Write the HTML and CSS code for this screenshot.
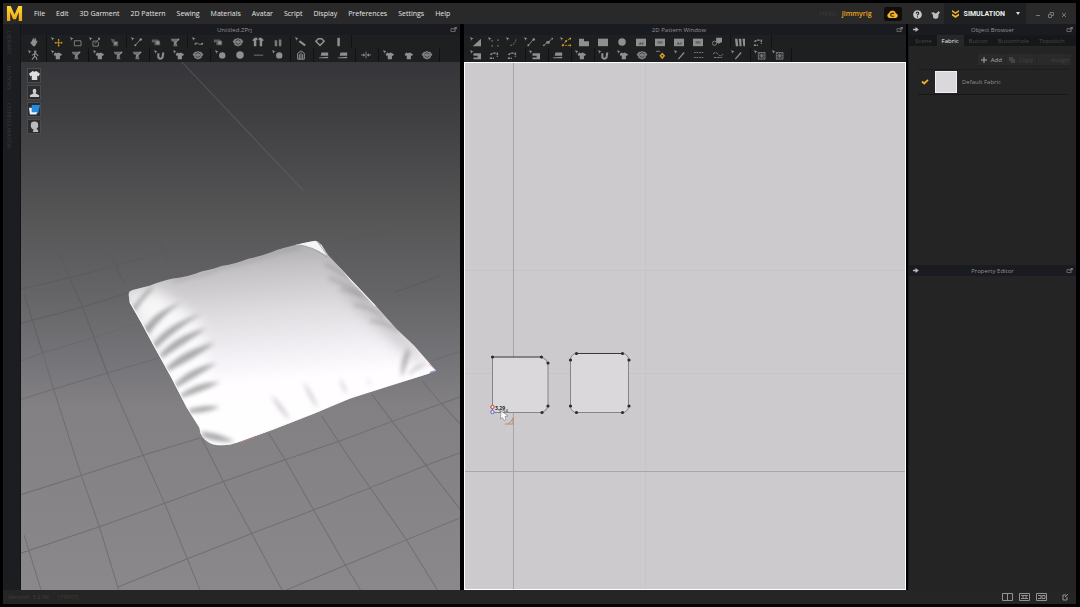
FILE: index.html
```html
<!DOCTYPE html>
<html lang="en">
<head>
<meta charset="utf-8">
<title>Untitled.ZPrj</title>
<link rel="stylesheet" href="styles.css">
</head>
<body>
<svg class="sprite" aria-hidden="true">
  <defs>
    <path id="cur" d="M0 0l4 2-2 .6L1.400 4.500z"/>
    <path id="tee" d="M5 3l2 .8L9 3l4 2-1.200 2.200-1.300-.5V11h-5V6.700l-1.300.5L3 5z"/>
  </defs>
  <symbol id="hand" viewBox="0 0 14 12"><path d="M4.500 5V3l1-.3L6 4l.3-3h1L7.800 4l.7-2.500 1 .3V5l1-.8.8.8-2.300 4.500L8 11H6L2.500 7l.8-.9z"/></symbol>
  <symbol id="walk" viewBox="0 0 14 12"><use href="#cur"/><circle cx="8.500" cy="2" r="1.500"/><path d="M7 4l3 1 2 2M8 4L4.500 6.500M8 4l-.5 4-3 3.500M7.700 7.500L10 9l.5 3" fill="none" stroke="currentColor" stroke-width="1.300"/></symbol>
  <symbol id="move" viewBox="0 0 14 12"><use href="#cur"/><path class="gold-line" d="M9 3v8M5 7h8"/><path class="gold" d="M9 2l1.300 2H7.700zM9 12l1.300-2H7.700zM4 7l2-1.300v2.600zM14 7l-2-1.300v2.600z"/></symbol>
  <symbol id="box" viewBox="0 0 14 12"><use href="#cur"/><path d="M5 4.500h8v6H5z" fill="none" stroke="currentColor"/></symbol>
  <symbol id="boxpen" viewBox="0 0 14 12"><use href="#cur"/><path d="M10 5H4.500v6H11V6M7 8l5-6" fill="none" stroke="currentColor"/><path d="M10 1h3v3z"/></symbol>
  <symbol id="pin" viewBox="0 0 14 12"><path d="M3 2l5 1v3l-3 1zM6 5h6v6H6z" opacity=".5"/><circle cx="9" cy="7.500" r="1.800"/></symbol>
  <symbol id="line" viewBox="0 0 14 12"><use href="#cur"/><path d="M5 10l6-7" stroke="currentColor"/><circle cx="5" cy="10" r="1.200"/><circle cx="11.500" cy="3" r="1.500"/></symbol>
  <symbol id="brush" viewBox="0 0 14 12"><use href="#cur"/><path d="M5 5l7 5" stroke="currentColor" stroke-width="2.500"/></symbol>
  <symbol id="seam" viewBox="0 0 14 12"><use href="#cur"/><path d="M4 8c2-3 4 3 8 0" stroke="currentColor" fill="none"/><circle cx="4" cy="8" r="1.200"/><circle cx="12" cy="8" r="1.200"/></symbol>
  <symbol id="tee1" viewBox="0 0 14 12"><use href="#tee"/></symbol>
  <symbol id="teecur" viewBox="0 0 14 12"><use href="#cur"/><use href="#tee"/></symbol>
  <symbol id="teefold" viewBox="0 0 14 12"><path d="M2 2h9l1 2H8l2 7H5L6 6 3 5z" opacity=".75"/><path d="M6 8l6-6" stroke="currentColor" stroke-width="1.600"/></symbol>
  <symbol id="teedot" viewBox="0 0 14 12"><path d="M2 3h7l3 2v5H5V6L2 7z" opacity=".55"/><circle cx="9" cy="7" r="2.200"/></symbol>
  <symbol id="pair" viewBox="0 0 14 12"><path d="M0 4l3-3h3l.5 3-1.500-.5V11H2V5zM14 4l-3-3H8l-.5 3 1.500-.5V11h3V5z"/></symbol>
  <symbol id="legs" viewBox="0 0 14 12"><path d="M3 4h3v7H3zM8 3h3v8H8z" opacity=".8"/></symbol>
  <symbol id="ring" viewBox="0 0 14 12"><path d="M2 5l3-3h4l3 3-5 5z" fill="none" stroke="currentColor" stroke-width="1.800"/></symbol>
  <symbol id="bar" viewBox="0 0 14 12"><path d="M5 1h3v10H5z"/></symbol>
  <symbol id="hook" viewBox="0 0 14 12"><use href="#cur"/><path d="M5 4v5q3 3 5 0l1-6" fill="none" stroke="currentColor" stroke-width="2.500"/></symbol>
  <symbol id="ball" viewBox="0 0 14 12"><circle cx="7" cy="6" r="4.500"/></symbol>
  <symbol id="ballcur" viewBox="0 0 14 12"><use href="#cur"/><circle cx="8.500" cy="6.500" r="3.800"/></symbol>
  <symbol id="dash" viewBox="0 0 14 12"><path d="M1 5.500h11v1.500H1z" opacity=".6"/></symbol>
  <symbol id="gear" viewBox="0 0 14 12"><path d="M7 1l1.500 1.200 2.200-.2 1.800 2.200 1 1.600-1.800 1.700-.5 2.200-2.200.8L7 11.500l-2-1-2.300-.8-.4-2.200L.5 5.800 1.500 4.200 3.300 2l2.200.2z" opacity=".85"/><path d="M4 5l3-2 3 2M4 7l3 2 3-2" fill="none" stroke="#222" stroke-width=".7"/></symbol>
  <symbol id="jacket" viewBox="0 0 14 12"><path d="M3 4l4-3 4 3v7H3zM5 5v6M7 3v8M9 5v6" fill="none" stroke="currentColor" stroke-width="1.200"/></symbol>
  <symbol id="iron" viewBox="0 0 14 12"><path d="M4 3h8v4H3zM1 10V9l11-1v2z"/></symbol>
  <symbol id="split" viewBox="0 0 14 12"><path d="M7 2v8" stroke="currentColor"/><path d="M1 6h4M9 6h4" stroke="currentColor"/><path d="M6 6L3.500 4v4zM8 6l2.500-2v4z"/></symbol>
  <symbol id="tri" viewBox="0 0 14 12"><use href="#cur"/><path d="M13 2v9H3z"/></symbol>
  <symbol id="dots" viewBox="0 0 14 12"><use href="#cur"/><path d="M4 4h1.500v1.500H4zM11 3h1.500v1.500H11zM4 10h1.500v1.500H4zM11 10h1.500v1.500H11z"/></symbol>
  <symbol id="curve" viewBox="0 0 14 12"><use href="#cur"/><path d="M5 10q5 0 7-7" fill="none" stroke="currentColor" stroke-dasharray="2 1"/></symbol>
  <symbol id="nodes" viewBox="0 0 14 12"><path d="M2 10l9-7" stroke="currentColor"/><path d="M5 5h4v3H5z"/><circle cx="2" cy="10" r="1.100"/><circle cx="12" cy="2" r="1.100"/></symbol>
  <symbol id="goldnodes" viewBox="0 0 14 12"><use href="#cur"/><path class="gold-line" d="M3 10l4-5 5-3M3 10h9" stroke-dasharray="2 1"/><path class="gold" d="M2 9h2v2H2zM6 4h2v2H6zM11 1h2v2h-2zM11 9h2v2h-2z"/></symbol>
  <symbol id="poly" viewBox="0 0 14 12"><path d="M1 2h6v3h6v6H1z"/></symbol>
  <symbol id="rect" viewBox="0 0 14 12"><path d="M1 2h12v9H1z"/></symbol>
  <symbol id="rectin" viewBox="0 0 14 12"><path d="M1 2h12v9H1z"/><path d="M4 9l2-3 2 2 2-3v4z" fill="#555"/></symbol>
  <symbol id="rectbar" viewBox="0 0 14 12"><path d="M1 2h12v9H1z"/><path d="M4 5h6v3H4z" fill="#666"/></symbol>
  <symbol id="copy" viewBox="0 0 14 12"><path d="M6 1h7v5L9 8 6 6z"/><circle cx="4" cy="7.500" r="2.500" fill="none" stroke="currentColor"/></symbol>
  <symbol id="pleats" viewBox="0 0 14 12"><path d="M1 2h3l1 9H2zM5.500 2h3l.5 9H6.500zM10 2h3v9h-2z"/></symbol>
  <symbol id="machine" viewBox="0 0 14 12"><use href="#cur"/><path d="M4 4h9v7H4v-2h5V7H4z"/></symbol>
  <symbol id="stitch" viewBox="0 0 14 12"><path d="M3 6q1-3 8-2v4M2 10h5" fill="none" stroke="currentColor" stroke-width="1.800" stroke-dasharray="3 1"/></symbol>
  <symbol id="wave" viewBox="0 0 14 12"><path d="M1 5q3-4 6 0t6 0M2 9h10" fill="none" stroke="currentColor" stroke-dasharray="3 1"/></symbol>
  <symbol id="goldpin" viewBox="0 0 14 12"><path d="M1 1h5v1H1z"/><path class="gold" d="M8.500 3l3.500 4-3.500 4L5 7z"/><circle cx="8.500" cy="7" r="1" fill="#222"/></symbol>
  <symbol id="slash" viewBox="0 0 14 12"><use href="#cur"/><path d="M5 11l7-8" stroke="currentColor" stroke-width="1.500"/></symbol>
  <symbol id="dashbox" viewBox="0 0 14 12"><path d="M1 3h12M1 9h12" stroke="currentColor" stroke-dasharray="2 1"/></symbol>
  <symbol id="hatch" viewBox="0 0 14 12"><use href="#cur"/><path d="M5 3h8v8H5zM5 3l8 8M13 3l-8 8M9 3v8M5 7h8" fill="none" stroke="currentColor" stroke-width=".8"/></symbol>
  <symbol id="popout" viewBox="0 0 8 6"><path d="M5 2H1v3.500h5V3" fill="none" stroke="currentColor"/><path d="M4 0h4v3L7 2 5 4 4 3l2-2z"/></symbol>
  <symbol id="arrow" viewBox="0 0 8 6"><path d="M1 2h3V0l4 3-4 3V4H1z"/></symbol>
</svg>

<div class="app">
  <header class="menubar">
    <svg class="logo" viewBox="0 0 18 18" role="img" aria-label="Marvelous Designer">
      <defs><linearGradient id="lg" x1="0" y1="0" x2="0" y2="1"><stop offset="0" stop-color="#ffd83a"/><stop offset="1" stop-color="#f0a512"/></linearGradient></defs>
      <path fill="url(#lg)" d="M1 17V1h4l4 9 4-9h4v16h-3.500V7.500L10.500 15h-3L4.500 7.500V17z"/>
    </svg>
    <nav class="menus">
      <button>File</button><button>Edit</button><button>3D Garment</button><button>2D Pattern</button><button>Sewing</button><button>Materials</button><button>Avatar</button><button>Script</button><button>Display</button><button>Preferences</button><button>Settings</button><button>Help</button>
    </nav>
    <div class="account"><span class="hello">Hello,</span><a href="#account">jimmyrig</a></div>
    <button class="cloud" aria-label="Cloud"><svg viewBox="0 0 16 12"><path fill="#f5b52b" d="M4 11a3.200 3.200 0 0 1-.5-6A4.600 4.600 0 0 1 12.300 5 3.100 3.100 0 0 1 12 11z"/><path d="M10 5.200H7.500a1.800 1.800 0 0 0 0 3.600H10" fill="none" stroke="#3a2608" stroke-width="1.400"/></svg></button>
    <button class="round" aria-label="Help topics"><svg viewBox="0 0 10 10"><circle cx="5" cy="5" r="4.800" fill="#c9c9c9"/><path d="M3.500 4Q3.600 2.400 5 2.400T6.500 3.800Q6.400 4.600 5 5.200V6.200M5 7v1.200" fill="none" stroke="#292a29" stroke-width="1.200"/></svg></button>
    <button class="round" aria-label="Community"><svg viewBox="0 0 10 10"><path fill="#bdbdbd" d="M0 3l3-.5L5 4l2-1.200L8.500 1 10 3 8.500 4.500 8 8.500 5.500 10 2.500 9 2 5z"/></svg></button>
    <button class="mode"><svg viewBox="0 0 8 9"><path d="M0 0l4 2.500L8 0v2L4 4.500 0 2zM0 4l4 2.500L8 4v2.200L4 9 0 6.200z" fill="#f3b62b"/></svg><span>SIMULATION</span><i class="caret"></i></button>
    <div class="winbtns"><button aria-label="Minimize"><svg viewBox="0 0 6 6"><path d="M1 3.500h4"/></svg></button><button aria-label="Restore"><svg viewBox="0 0 6 6"><path d="M.5 2.500h3v3h-3zM2 2V.5h3.500v3H4"/></svg></button><button aria-label="Close"><svg viewBox="0 0 6 6"><path d="M1 1l4 4M5 1L1 5"/></svg></button></div>
  </header>

  <div class="workspace">
    <aside class="rail"><button>LIBRARY</button><button>HISTORY</button><button>CONFIGURATOR</button></aside>

    <section class="panel view3d">
      <h2 class="title"><span>Untitled.ZPrj</span><button aria-label="Pop out 3D window"><svg><use href="#popout"/></svg></button></h2>
      <div class="tools" data-tools="hand|move box boxpen pin|line teedot teefold|seam teedot gear pair legs~|brush ring bar"></div>
      <div class="tools" data-tools="walk|teecur teefold|teecur teefold teefold|hook teecur gear|ballcur ball dash ballcur|jacket|iron iron|split|teecur tee1 gear"></div>
      <div class="stage">
        <svg class="scene" viewBox="63 -294 1317 1578" preserveAspectRatio="xMidYMid slice" role="img" aria-label="Pillow on a floor grid">
          <defs>
            <linearGradient id="sky" x1="0" y1="0" x2="0" y2="1"><stop offset="0" stop-color="#36363a"/><stop offset=".08" stop-color="#3d3d40"/><stop offset=".19" stop-color="#49494b"/><stop offset=".3" stop-color="#565657"/><stop offset=".45" stop-color="#666568"/><stop offset=".58" stop-color="#77767a"/><stop offset=".65" stop-color="#828083"/><stop offset="1" stop-color="#8a888a"/></linearGradient>
            <linearGradient id="cloth" x1=".42" y1="0" x2=".55" y2="1"><stop offset="0" stop-color="#a9a8aa"/><stop offset=".14" stop-color="#c4c2c4"/><stop offset=".35" stop-color="#e0dde1"/><stop offset=".55" stop-color="#f4f1f6"/><stop offset=".68" stop-color="#fffdff"/><stop offset="1" stop-color="#fff"/></linearGradient>
            <filter id="soft" x="-20%" y="-20%" width="140%" height="140%"><feGaussianBlur stdDeviation="6"/></filter>
            <filter id="softer" x="-30%" y="-30%" width="160%" height="160%"><feGaussianBlur stdDeviation="20"/></filter>
            <path id="pillow" d="M387 400Q388 390 402 387L452 374Q480 362 520 353Q565 348 605 332Q640 326 665 316Q710 308 745 294Q800 282 830 268Q880 254 905 248L945 240Q955 241 962 251L985 285L1052 357L1125 434L1187 503L1240 553L1306 629L1285 637L1200 664L1050 712L940 757L820 804L710 844Q680 856 640 849Q612 840 603 818L598 798L560 737L515 650L460 550L425 485L390 424Z"/>
            <clipPath id="pc"><use href="#pillow"/></clipPath>
          </defs>
          <path fill="url(#sky)" d="M0-294h1500v1578H0z"/>
          <path d="M546-294L909 90" stroke="#6c6c6b" stroke-width="3" opacity=".5"/>
          <g class="floor">
            <path opacity=".6" stroke="#58585a" d="M62 385L235 345L400 300L520 265M62 488L250 438L390 395M175 270L250 440L325 640M325 265L375 370M480 250L505 300M75 400L130 575M1040 240L1260 180M1180 395L1320 345"/>
            <path opacity=".75" d="M130 575L165 690L245 940L300 1095L357 1283M75 1120L125 1283M325 640L430 880L495 1025L600 1283M605 830L670 960L755 1115L845 1283M805 815L855 895L940 1045L1035 1210L1080 1283M965 765L1040 880L1110 980L1215 1130L1310 1283M1115 700L1175 780L1275 910L1380 1046M1265 660L1320 725L1380 790M62 600L130 575L280 530L440 480M62 715L165 683L325 635L480 590M62 1000L250 940L435 880L600 830M62 1175L300 1095L495 1025L675 958L855 895L1020 838L1175 780L1380 706M355 1275L565 1190L755 1115L940 1045L1110 978L1275 912L1380 873M860 1283L1035 1210L1215 1135L1380 1068M1290 600L1380 570"/>
          </g>
          <use href="#pillow" fill="url(#cloth)"/>
          <g clip-path="url(#pc)">
            <path d="M370 395L590 770L650 740L600 480L470 385Z" fill="#fff" opacity=".8" filter="url(#softer)"/>
            <path d="M980 270L1060 350L1240 550L1280 625L1200 560L1050 420Z" fill="#aaa7aa" opacity=".55" filter="url(#softer)"/>
            <g filter="url(#soft)" fill="#8d8c90" opacity=".75">
              <path d="M396 444Q430 395 458 376L460 382Q430 415 405 452Z"/>
              <path d="M430 508Q465 450 545 425Q490 460 446 520Z"/>
              <path d="M458 552Q500 490 605 458Q530 505 468 562Z"/>
              <path d="M478 584Q530 520 620 502Q560 545 488 590Z"/>
              <path d="M498 622Q550 565 645 545Q590 590 504 630Z"/>
              <path d="M523 670Q575 615 650 606Q600 640 528 680Z"/>
              <path d="M538 704Q590 660 660 663Q610 690 543 710Z"/>
              <path d="M563 747Q605 730 660 736Q620 755 570 755Z"/>
              <path d="M605 810Q650 812 705 840Q650 845 608 825Z"/>
            </g>
            <g filter="url(#soft)" fill="none" stroke="#8c898d" stroke-width="7" opacity=".6">
              <path d="M975 310Q1010 330 1050 350M985 350Q1035 370 1085 400M1020 385Q1070 395 1105 420M1060 432Q1110 435 1150 470M1110 480Q1150 480 1195 510"/>
              <path d="M520 360L570 349L620 338L660 322L750 300L840 272L900 260" stroke-width="5"/>
            </g>
            <path d="M905 248L945 236L980 285Q935 255 880 252Z" fill="#f4f3f5"/>
            <path d="M885 252Q940 257 980 290" fill="none" stroke="#a9a7a9" stroke-width="4"/>
            <g filter="url(#soft)" opacity=".7"><path d="M1222 560Q1195 600 1203 650Q1220 610 1228 575M1285 605Q1240 610 1220 645Q1250 620 1285 605" fill="#9b979c"/></g>
            <g filter="url(#soft)" fill="#c9c6cb" opacity=".8"><path d="M812 700Q850 730 870 775Q835 755 812 700M908 660Q940 695 954 742Q925 715 908 660M1018 650Q1035 670 1040 700Q1024 685 1018 650M1103 645L1112 675L1104 665"/></g>
            <path d="M390 424L425 485L515 650L603 818M710 844L940 757L1285 637M962 251L1052 357L1125 434" fill="none" stroke="#f7f6f8" stroke-width="5"/>
          </g>
          <path d="M720 843L765 826M1285 608L1300 622" stroke="#d87d88" stroke-width="2"/>
          <path d="M1288 634L1304 629" stroke="#8f8fdd" stroke-width="4"/>
        </svg>
        <div class="display-modes">
          <button aria-label="Show garment"><svg viewBox="0 0 12 12"><path fill="#dedede" d="M4 1l2 1 2-1 4 3-1.500 3L9 6v5H3V6l-1.500 1L0 4z"/></svg></button>
          <button aria-label="Show avatar"><svg viewBox="0 0 12 12"><path fill="#cfcfcf" d="M4 4a2 2 0 1 1 4 0q0 2-1 2.800L11 9v2H1V9l4-2.200Q4 6 4 4z"/></svg></button>
          <button aria-label="Texture surface"><svg viewBox="0 0 12 12"><path fill="#238be0" d="M3 1h9l-2 9H3z"/><path fill="#e8f4ff" d="M0 4h3v5h6l-1 2.500H1z"/></svg></button>
          <button aria-label="Avatar texture"><svg viewBox="0 0 12 12"><path fill="#bababa" d="M2 4q0-3.500 4-3.500T10 4v2Q9.500 8 8 8.500L10 10v2H4l1-2.500Q2 8 2 6z"/></svg></button>
        </div>
      </div>
    </section>

    <section class="panel view2d">
      <h2 class="title"><span>2D Pattern Window</span><button aria-label="Pop out 2D window"><svg><use href="#popout"/></svg></button></h2>
      <div class="tools" data-tools="tri dots curve line nodes goldnodes+poly rect ball rectin rectbar rectin rectbar copy~|pleats stitch"></div>
      <div class="tools" data-tools="machine stitch stitch|machine|iron|teecur|hook teecur gear goldpin slash dashbox wave slash~|hatch hatch"></div>
      <svg class="pattern" viewBox="465 63 440 526" preserveAspectRatio="xMidYMid slice" role="img" aria-label="Two pattern pieces">
        <defs><pattern id="weave" width="8" height="8" patternUnits="userSpaceOnUse"><path d="M.5 0v8M0 .5h8" stroke="#c7c5c8" stroke-width="1" opacity=".4"/></pattern></defs>
        <path d="M400 0h600v700H400z" fill="#cdcbce"/>
        <path d="M464 62h442v528H464z" fill="url(#weave)"/>
        <path d="M464 270.500h442M464 373.500h442M645.500 62v528" stroke="#c3c1c4" opacity=".6"/>
        <path d="M513.500 62v528M464 471.500h442" stroke="#a8a7a8"/>
        <path d="M492.500 357.500H542l6 6V406l-6 6.500H492.500z" fill="#dad8db"/>
        <path d="M548 363.500V406M542 412.500H492.500V357.500M542 357.500q5 1 6 6M548 406q-1 5-6 6.500" fill="none" stroke="#858487"/>
        <path d="M492.500 357H542" stroke="#39393c" stroke-width="1.200"/>
        <rect x="570.500" y="353.500" width="58" height="59" rx="6" fill="#dad8db" stroke="#858487"/>
        <path d="M576 353.500h47" stroke="#39393c" stroke-width="1.200"/>
        <g fill="#2c2b30"><circle cx="492.500" cy="357" r="1.600"/><circle cx="541.500" cy="357" r="1.600"/><circle cx="548" cy="363" r="1.600"/><circle cx="548" cy="406" r="1.600"/><circle cx="542" cy="412.500" r="1.600"/><circle cx="576.500" cy="353.500" r="1.600"/><circle cx="622.500" cy="353.500" r="1.600"/><circle cx="570.500" cy="360" r="1.600"/><circle cx="629" cy="360" r="1.600"/><circle cx="570.500" cy="406" r="1.600"/><circle cx="629" cy="406" r="1.600"/><circle cx="576.500" cy="412.500" r="1.600"/><circle cx="622.500" cy="412.500" r="1.600"/></g>
        <g fill="#eee"><circle cx="492.500" cy="407" r="1.700" stroke="#c13d45"/><circle cx="492.500" cy="412" r="1.700" stroke="#5f5fc9"/></g>
        <text class="coord" x="495" y="410">3.29</text><text class="coord faint" x="498" y="413">3.54</text>
        <path d="M501 411l7 5-3 .5 1 3-2 1-1.500-3-2 1.500z" fill="#fff" stroke="#79777e" stroke-width=".6"/>
        <path d="M505 424q5 1 8-6v6h-5" fill="none" stroke="#b98e68"/>
      </svg>
    </section>

    <aside class="panel right">
      <section class="browser">
        <h2 class="title"><svg class="lead" aria-hidden="true"><use href="#arrow"/></svg><span>Object Browser</span><button aria-label="Pop out Object Browser"><svg><use href="#popout"/></svg></button></h2>
        <nav class="tabs"><button>Scene</button><button class="on">Fabric</button><button>Button</button><button>Buttonhole</button><button>Topstitch</button></nav>
        <div class="actions"><button class="live"><svg viewBox="0 0 6 6"><path d="M3 0v6M0 3h6" stroke="currentColor"/></svg>Add</button><button><svg viewBox="0 0 6 6"><path d="M0 0h4v4H0zM2 2h4v4H2z" fill="currentColor"/></svg>Copy</button><button class="assign">Assign</button></div>
        <div class="fabric"><svg class="check" viewBox="0 0 8 6" aria-label="Applied"><path d="M1 2.500l2.200 2L7 .8" fill="none" stroke="#eeb02c" stroke-width="1.800"/></svg><span class="swatch"></span><span>Default Fabric</span></div>
      </section>
      <section class="editor">
        <h2 class="title"><svg class="lead" aria-hidden="true"><use href="#arrow"/></svg><span>Property Editor</span><button aria-label="Pop out Property Editor"><svg><use href="#popout"/></svg></button></h2>
      </section>
    </aside>
  </div>

  <footer class="status">
    <span class="version">Version: 3.2.96</span><span class="version">(19607)</span>
    <div class="layouts">
      <button aria-label="Split layout"><svg viewBox="0 0 12 8"><path d="M.5.5h10v7H.5zM5.500 1v6"/></svg></button>
      <button aria-label="3D layout"><svg viewBox="0 0 12 8"><path d="M.5.5h10v7H.5zM2 2.500h7M2 5.500h7M4 3v2M7 3v2"/></svg></button>
      <button aria-label="2D layout"><svg viewBox="0 0 12 8"><path d="M.5.5h10v7H.5zM2 2.500h3v3H2M6 5.500v-3h3v3z"/></svg></button>
      <button class="reset" aria-label="Reset layout"><svg viewBox="0 0 12 8"><path d="M7 2H4v5h4V4M6 4l3-3"/></svg></button>
    </div>
  </footer>
</div>
<script src="tools.js"></script>
</body>
</html>
```

FILE: styles.css
```css
* { box-sizing: border-box; }
body {
  margin: 0;
  background: #000;
  color: #a5a5a5;
  font: 7px/10px "Open Sans", "Noto Sans", sans-serif;
}
button {
  margin: 0;
  padding: 0;
  border: 0;
  background: none;
  color: inherit;
  font: inherit;
  display: flex;
  align-items: center;
  justify-content: center;
}
a { color: inherit; text-decoration: none; }
svg { display: block; fill: currentColor; }
.sprite { position: absolute; width: 0; height: 0; }

.app {
  display: flex;
  flex-direction: column;
  min-height: 100vh;
  padding: 3px 4px 4px 3px;
}

.menubar {
  display: flex;
  align-items: center;
  height: 21px;
  padding-left: 3px;
  background: #282928;
}
.logo { width: 17px; height: 17px; }
.menus { display: flex; gap: 11px; margin-left: 11px; color: #e6e6e6; font-weight: 400; height: 14px; }
.account { display: flex; gap: 4px; margin-left: auto; color: #f1a51d; font-weight: 600; }
.hello { color: #3a3a37; font-weight: 400; }
.cloud { width: 18px; height: 14px; margin: 0 11px 0 12px; background: #100d08; border-radius: 2px; }
.cloud svg { width: 13px; height: 10px; }
.round { margin: 2px 9px 0 0; }
.round svg { width: 9px; height: 9px; }
.round + .mode { margin-left: -5px; }
.mode { height: 21px; padding: 0 6px 0 8px; background: #1f2021; color: #f0f0f0; font-family: Roboto, sans-serif; font-weight: 700; }
.mode svg { width: 7px; height: 8px; margin-right: 5px; }
.caret { margin-left: 11px; border: 2px solid transparent; border-top: 3px solid #ddd; border-bottom: 0; }
.winbtns { display: flex; gap: 7px; margin: 2px 9px 0 9px; color: #777; }
.winbtns svg { width: 6px; height: 6px; fill: none; stroke: currentColor; }

.workspace { display: flex; flex: 1; }
.rail {
  display: flex;
  flex-direction: column;
  gap: 12px;
  width: 18px;
  padding: 7px 0 0 2px;
  background: #1b1d20;
  border-right: 1px solid #131417;
  color: #38393b;
  font-size: 6px;
  line-height: 8px;
}
.rail button { writing-mode: vertical-rl; align-self: flex-start; }

.panel { display: flex; flex-direction: column; min-width: 0; }
.view3d { flex: 439; }
.view2d { flex: 442; margin: 0 2px 0 4px; }
.right { flex: 0 0 168px; }

.title {
  display: flex;
  align-items: center;
  height: 11px;
  margin: 0;
  padding: 0 3px;
  background: #1a1b20;
  color: #929292;
  font-size: 6px;
  font-weight: 400;
}
.title span { flex: 1; text-align: center; }
.view3d .title span, .view2d .title span { padding-right: 5px; }
.title svg { width: 7px; height: 5px; color: #777; }
.title .lead { color: #bbb; }

.tools { display: flex; height: 13px; padding-left: 3px; background: #1e1f20; color: #8f8f8f; }
.tools + .tools { height: 14px; }
.group { display: flex; }
.group.loose { gap: 1px; }
.group.cut { padding-right: 3px; border-right: 1px solid #111214; }
.tools button { width: 19px; }
.tools svg { width: 12px; height: 10px; }
.view2d .group.cut { padding-right: 4px; }
.view2d .tools button { width: 18px; }
.gold { fill: #d49d28; }
.gold-line { fill: none; stroke: #d49d28; }

.stage { position: relative; display: flex; flex: 1; min-height: 0; }
.scene { flex: 1; width: 100%; min-width: 0; height: auto; }
.floor { fill: none; stroke: #69686a; stroke-width: 3; }
.display-modes { position: absolute; top: 6px; left: 6px; display: flex; flex-direction: column; gap: 2px; }
.display-modes button { width: 14px; height: 15px; background: #2b2c2f; border: 1px solid #4b4b4e; }
.display-modes svg { width: 11px; height: 11px; }

.pattern { flex: 1; width: 100%; min-height: 0; border: 1px solid #fff; background: #cdcbce; }
.coord { font-size: 5px; font-weight: 700; fill: #222; }
.faint { fill: #77757d; }

.right { background: #232423; border-left: 1px solid #191a1d; }
.browser { flex: 241; }
.editor { flex: 324; }
.browser, .editor { min-height: 0; }
.tabs { display: flex; height: 11px; padding-left: 1px; background: #161718; color: #47484a; font-size: 6px; }
.tabs button { padding: 0 5px; }
.tabs .on { background: #262728; color: #eee; }
.actions { display: flex; justify-content: flex-end; gap: 1px; margin: 8px 5px 0 0; color: #444; font-size: 6px; }
.actions button { height: 11px; padding: 0 3px; gap: 4px; background: #292a29; }
.actions svg { width: 6px; height: 6px; }
.actions .live { color: #aaa; }
.actions .assign { padding: 0 2px 0 14px; }
.fabric {
  display: flex;
  align-items: center;
  height: 26px;
  margin: 4px 7px 0 9px;
  padding-left: 3px;
  border-top: 1px solid #1b1c1b;
  border-bottom: 1px solid #171817;
  color: #909090;
  font-size: 6px;
}
.check { width: 8px; height: 6px; }
.swatch { width: 22px; height: 22px; margin: 0 5px 0 6px; background: #dad7dd; border: 1px solid #f0eef2; }

.status {
  display: flex;
  align-items: center;
  gap: 9px;
  height: 14px;
  padding: 0 5px;
  background: #242524;
  color: #40403e;
  font-size: 6px;
}
.layouts { display: flex; gap: 5px; margin-left: auto; color: #929292; }
.layouts svg { width: 12px; height: 8px; fill: none; stroke: currentColor; }
.reset { margin-left: 6px; }
```

FILE: tools.js
```js
// Tool rows are described as icon names: "|" divides groups, "+" starts a
// joined group with no divider, "~" marks a group with looser spacing.
document.querySelectorAll('[data-tools]').forEach(function (row) {
  row.dataset.tools.split('|').forEach(function (block) {
    var parts = block.split('+');
    parts.forEach(function (part, i) {
      var group = document.createElement('div');
      group.className = 'group' + (part.endsWith('~') ? ' loose' : '') + (i === parts.length - 1 ? ' cut' : '');
      part.replace('~', '').split(' ').forEach(function (name) {
        group.insertAdjacentHTML('beforeend',
          '<button aria-label="' + name + '"><svg><use href="#' + name + '"/></svg></button>');
      });
      row.appendChild(group);
    });
  });
});
```
